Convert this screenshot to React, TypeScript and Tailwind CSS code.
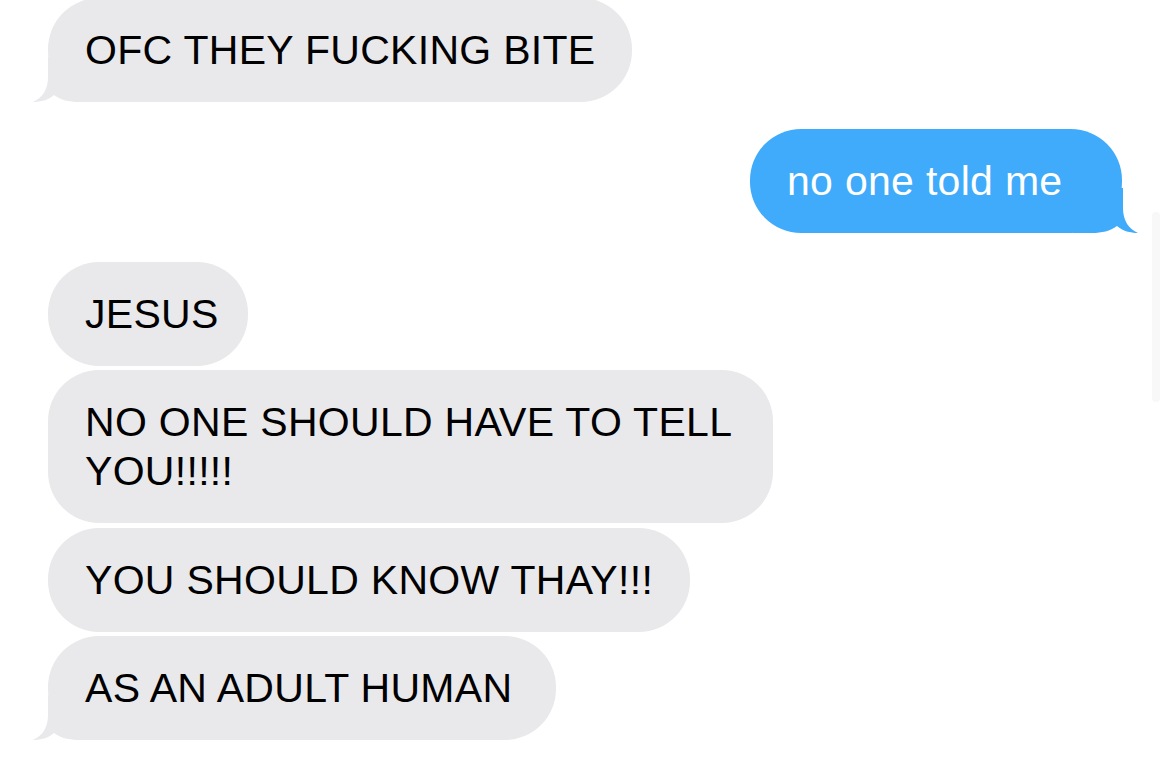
import React from "react";

type Msg = {
  text: string[];
  fromMe?: boolean;
  tail?: boolean;
  width: string;
  gap: string;
};

const messages: Msg[] = [
  { text: ["OFC THEY FUCKING BITE"], tail: true, width: "w-[584px]", gap: "-mt-[2px]" },
  { text: ["no one told me"], fromMe: true, tail: true, width: "w-[372px]", gap: "mt-[27px]" },
  { text: ["JESUS"], width: "w-[200px]", gap: "mt-[29px]" },
  { text: ["NO ONE SHOULD HAVE TO TELL", "YOU!!!!!"], width: "w-[725px]", gap: "mt-[4px]" },
  { text: ["YOU SHOULD KNOW THAY!!!"], width: "w-[642px]", gap: "mt-[5px]" },
  { text: ["AS AN ADULT HUMAN"], tail: true, width: "w-[508px]", gap: "mt-[4px]" },
];

// bubble tail, drawn for the left side; flipped for sent messages
function Tail({ fromMe }: { fromMe?: boolean }) {
  return (
    <svg
      width="65"
      height="45"
      viewBox="0 0 65 45"
      className={
        fromMe
          ? "absolute bottom-0 -right-[16px] -scale-x-100 fill-[#40abfb]"
          : "absolute bottom-0 -left-[15px] fill-[#e9e9eb]"
      }
    >
      <path d="M15 0 L15 20 C15 33 9 41 0 45 C8 45 15 43 21 38 C28 43 36 45 46 45 L65 45 L65 0 Z" />
    </svg>
  );
}

function Bubble({ msg }: { msg: Msg }) {
  return (
    <div
      className={`relative ${msg.width} ${msg.gap} ${
        msg.fromMe ? "self-end mr-[48px] bg-[#40abfb] text-white" : "bg-[#e9e9eb] text-black"
      } rounded-[51px] pl-[37px] py-[27.5px] text-[41px] leading-[49px] tracking-[0.3px] whitespace-nowrap`}
    >
      {msg.tail && <Tail fromMe={msg.fromMe} />}
      <div className="relative">
        {msg.text.map((line, i) => (
          <div key={i}>{line}</div>
        ))}
      </div>
    </div>
  );
}

export default function App() {
  return (
    <div
      className="relative h-[766px] w-[1170px] overflow-hidden bg-white"
      style={{ fontFamily: '"Liberation Sans", Arial, sans-serif' }}
    >
      <div className="flex flex-col items-start pl-[48px]">
        {messages.map((m, i) => (
          <Bubble key={i} msg={m} />
        ))}
      </div>

      {/* faint scroll indicator */}
      <div className="absolute left-[1152px] top-[212px] h-[190px] w-[8px] rounded-full bg-[#f8f8f8]" />
    </div>
  );
}
